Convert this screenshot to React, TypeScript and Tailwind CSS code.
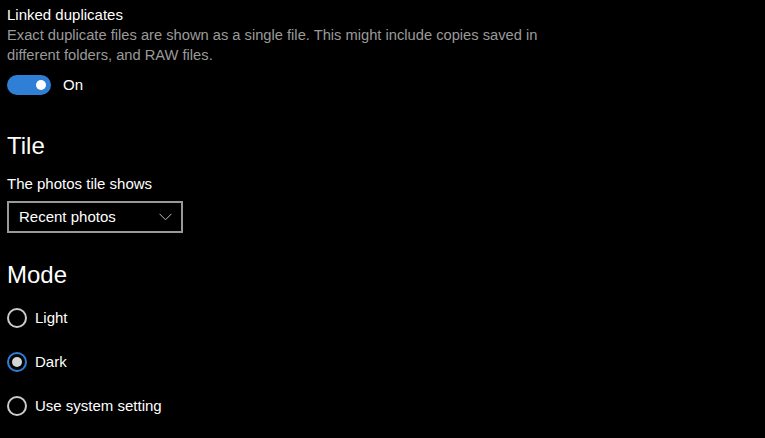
const Radio = ({ label, checked = false }: { label: string; checked?: boolean }) => (
  <div className="flex h-[44px] items-center gap-2">
    <span
      className={`flex h-5 w-5 items-center justify-center rounded-full border-2 ${
        checked ? 'border-[#2f7fd6]' : 'border-[#cccccc]'
      }`}
    >
      {checked && <span className="h-[10px] w-[10px] rounded-full bg-[#d4d4d4]" />}
    </span>
    <span className="text-[15px] text-white">{label}</span>
  </div>
);

export default function App() {
  return (
    <div
      className="h-[438px] w-[765px] overflow-hidden bg-black pl-[7px] pt-[5px] text-white"
      style={{ fontFamily: '"Liberation Sans", Arial, sans-serif' }}
    >
      <div className="text-[15px] leading-5">Linked duplicates</div>
      <p className="w-[600px] text-[14.7px] leading-5 text-[#9a9a9a]">
        Exact duplicate files are shown as a single file. This might include copies saved in
        <br />
        different folders, and RAW files.
      </p>
      <div className="mt-[10px] flex h-5 items-center gap-3">
        <span className="flex h-5 w-11 items-center justify-end rounded-full bg-[#2f7fd6] pr-[5px]">
          <span className="h-[10px] w-[10px] rounded-full bg-white" />
        </span>
        <span className="text-[15px]">On</span>
      </div>

      <h2 className="mt-[35px] text-[24px] font-light leading-8">Tile</h2>
      <div className="mt-3 text-[15px] leading-5">The photos tile shows</div>
      <div className="mt-[7px] flex h-8 w-[176px] items-center justify-between border-2 border-[#999999] pl-[10px] pr-[9px]">
        <span className="text-[15px]">Recent photos</span>
        <svg width="13" height="8" viewBox="0 0 13 8" fill="none">
          <path d="M0.5 0.8L6.5 6.8L12.5 0.8" stroke="#bdbdbd" strokeWidth="1" />
        </svg>
      </div>

      <h2 className="mt-[26px] text-[24px] font-light leading-8">Mode</h2>
      <div className="mt-[5px]">
        <Radio label="Light" />
        <Radio label="Dark" checked />
        <Radio label="Use system setting" />
      </div>
    </div>
  );
}
